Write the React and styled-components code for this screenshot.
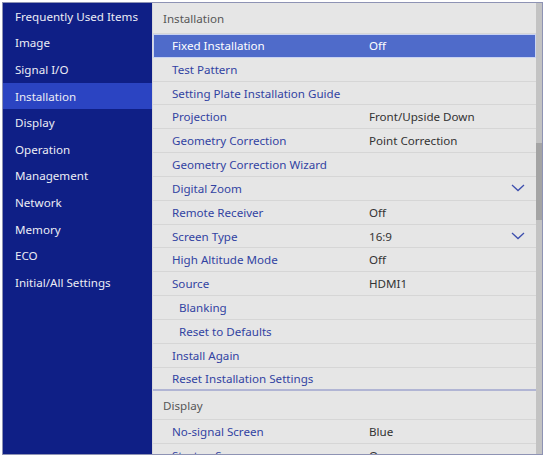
import React from 'react'
import styled, { createGlobalStyle } from 'styled-components'

const GlobalStyle = createGlobalStyle`
  html, body {
    margin: 0;
    padding: 0;
    background: #ffffff;
  }
  body {
    font-family: "Noto Sans", "Open Sans", sans-serif;
  }
`

const menu = [
  'Frequently Used Items',
  'Image',
  'Signal I/O',
  'Installation',
  'Display',
  'Operation',
  'Management',
  'Network',
  'Memory',
  'ECO',
  'Initial/All Settings',
]

const installRows = [
  { label: 'Fixed Installation', value: 'Off', active: true },
  { label: 'Test Pattern' },
  { label: 'Setting Plate Installation Guide' },
  { label: 'Projection', value: 'Front/Upside Down' },
  { label: 'Geometry Correction', value: 'Point Correction' },
  { label: 'Geometry Correction Wizard' },
  { label: 'Digital Zoom', drop: true },
  { label: 'Remote Receiver', value: 'Off' },
  { label: 'Screen Type', value: '16:9', drop: true },
  { label: 'High Altitude Mode', value: 'Off' },
  { label: 'Source', value: 'HDMI1' },
  { label: 'Blanking', sub: true },
  { label: 'Reset to Defaults', sub: true },
  { label: 'Install Again' },
  { label: 'Reset Installation Settings', last: true },
]

const displayRows = [
  { label: 'No-signal Screen', value: 'Blue' },
  { label: 'Startup Screen', value: 'On' },
]

const Chevron = () => (
  <svg width="14" height="8" viewBox="0 0 14 8">
    <path d="M1 1 L7 6.5 L13 1" fill="none" stroke="#3d4fae" strokeWidth="1.3" />
  </svg>
)

const App = () => {
  return (
    <>
      <GlobalStyle />
      <Frame>
        <Sidebar>
          {menu.map((m) => (
            <MenuItem key={m} $active={m === 'Installation'}>{m}</MenuItem>
          ))}
        </Sidebar>
        <Panel>
          <SectionHeader>Installation</SectionHeader>
          {installRows.map((r) => (
            <Row key={r.label} $active={r.active} $sub={r.sub} $last={r.last}>
              <Label>{r.label}</Label>
              <Value $active={r.active}>{r.value}</Value>
              <Drop>{r.drop && <Chevron />}</Drop>
            </Row>
          ))}
          <SectionHeader $h={29}>Display</SectionHeader>
          {displayRows.map((r) => (
            <Row key={r.label}>
              <Label>{r.label}</Label>
              <Value>{r.value}</Value>
              <Drop />
            </Row>
          ))}
        </Panel>
        <ScrollTrack>
          <Thumb />
        </ScrollTrack>
      </Frame>
    </>
  )
}

const Frame = styled.div`
  margin: 2px 0 0 2px;
  width: 541px;
  height: 453px;
  box-sizing: border-box;
  border: 1px solid #8e93b4;
  display: flex;
  overflow: hidden;
  background: #e6e6e6;
`

const Sidebar = styled.nav`
  width: 149px;
  flex-shrink: 0;
  background: #0f1f86;
  display: flex;
  flex-direction: column;
`

const MenuItem = styled.div`
  height: 26.6px;
  display: flex;
  align-items: center;
  padding-left: 12px;
  font-size: 11.6px;
  color: #ecedf5;
  background: ${({ $active }) => ($active ? '#2b44c2' : 'transparent')};
`

const Panel = styled.section`
  flex: 1;
  display: flex;
  flex-direction: column;
  overflow: hidden;
  border-left: 1px solid #d8d8dc;
`

const SectionHeader = styled.div`
  height: ${({ $h }) => $h || 31}px;
  flex-shrink: 0;
  box-sizing: border-box;
  display: flex;
  align-items: center;
  padding-left: 10px;
  font-size: 11.6px;
  color: #575757;
  border-bottom: 1px solid #d6d6d6;
`

const Row = styled.div`
  flex-shrink: 0;
  box-sizing: border-box;
  display: grid;
  grid-template-columns: ${({ $sub }) => ($sub ? '190px' : '197px')} 1fr 36px;
  align-items: center;
  padding-left: ${({ $sub, $active }) => ($sub ? '26px' : $active ? '18px' : '19px')};
  font-size: 11.6px;
  color: ${({ $active }) => ($active ? '#ffffff' : '#3243a2')};
  background: ${({ $active }) => ($active ? '#4f6bca' : 'transparent')};
  border: ${({ $active }) => ($active ? '1px solid #c9d3f2' : 'none')};
  border-bottom: ${({ $active, $last }) =>
    $active ? '1px solid #c9d3f2' : $last ? '2px solid #b1b5d4' : '1px solid #d6d6d6'};
  height: 23.83px;
`

const Label = styled.span`
  white-space: nowrap;
`

const Value = styled.span`
  white-space: nowrap;
  color: ${({ $active }) => ($active ? '#ffffff' : '#333333')};
`

const Drop = styled.span`
  display: flex;
  align-items: center;
  justify-content: center;
`

const ScrollTrack = styled.div`
  width: 6px;
  flex-shrink: 0;
  background: #c3c3c3;
  position: relative;
`

const Thumb = styled.div`
  position: absolute;
  left: 0;
  right: 0;
  top: 140px;
  height: 77px;
  background: #a4a4a4;
`

export default App
